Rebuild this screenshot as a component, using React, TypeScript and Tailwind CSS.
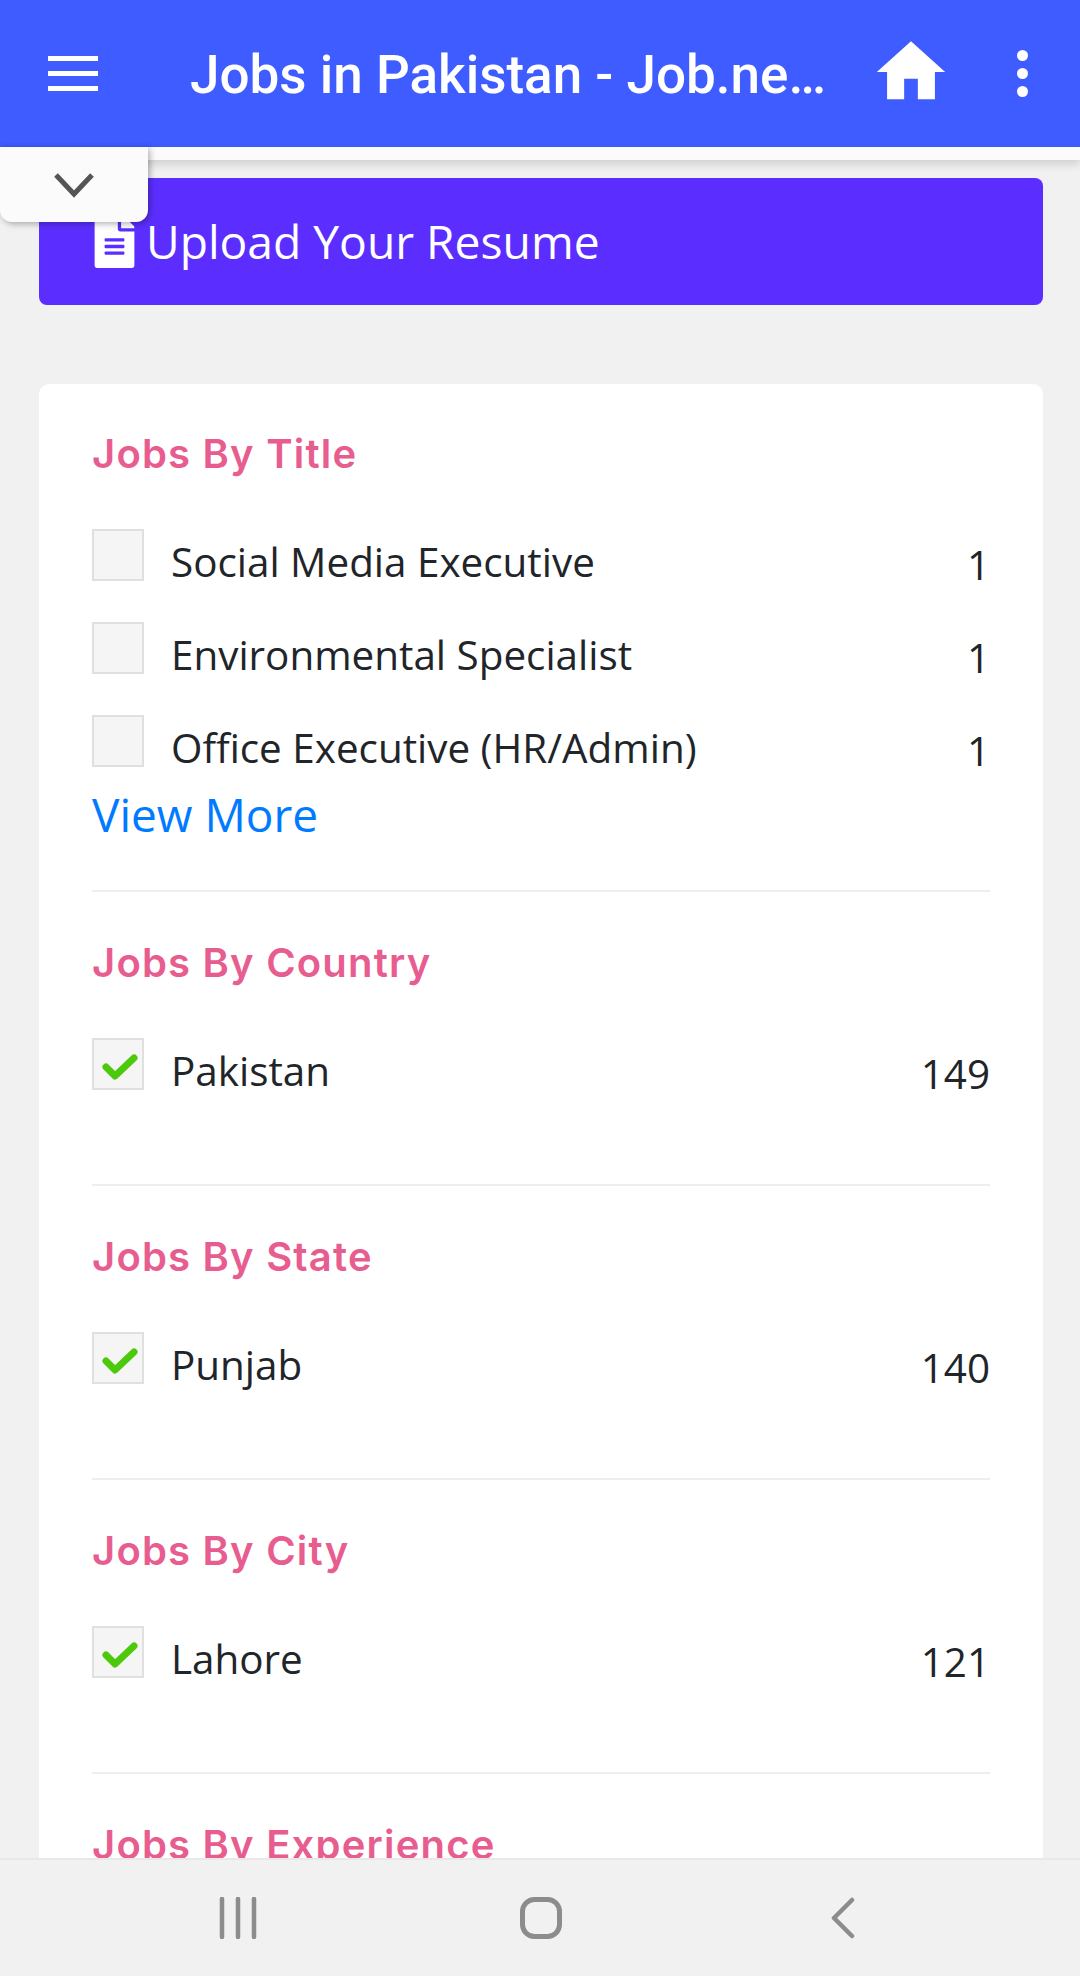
import { FaFileAlt } from "react-icons/fa";
import { MdHome } from "react-icons/md";

const titleJobs = [
  { name: "Social Media Executive", count: 1 },
  { name: "Environmental Specialist", count: 1 },
  { name: "Office Executive (HR/Admin)", count: 1 },
];

function FilterRow({ name, count, checked }: { name: string; count: number; checked?: boolean }) {
  return (
    <div className="flex items-start">
      <div className="h-[52px] w-[52px] shrink-0 border-2 border-[#e0e0e0] bg-[#f5f5f5]">
        {checked ? (
          <svg width="48" height="48" viewBox="0 0 48 48" fill="none" stroke="#4cc90a" strokeWidth="7" strokeLinecap="round" strokeLinejoin="round">
            <path d="M12 27l9 9 19-18" />
          </svg>
        ) : null}
      </div>
      <span className="ml-[27px] mt-[5px] flex-1 text-[40.4px] leading-[56px] text-[#212529]">{name}</span>
      <span className="mt-[8px] text-[40.4px] leading-[56px] text-[#212529]">{count}</span>
    </div>
  );
}

function Heading({ children }: { children: string }) {
  return (
    <h3 className="mb-[53px] text-[40px] leading-[44px] font-semibold tracking-[1.2px] text-[#e85d90] font-['Inter',sans-serif]">
      {children}
    </h3>
  );
}

function SingleSection({ title, name, count }: { title: string; name: string; count: number }) {
  return (
    <section className="border-b-2 border-[#eeeeee] pb-[82px] pt-[49px]">
      <Heading>{title}</Heading>
      <FilterRow name={name} count={count} checked />
    </section>
  );
}

export default function App() {
  return (
    <div className="relative flex h-[1976px] w-[1080px] flex-col overflow-hidden bg-[#f1f1f1] font-['Open_Sans',sans-serif]">
      <header className="flex h-[147px] shrink-0 items-center bg-[#3e5cff] font-['Roboto',sans-serif] text-white">
        <div className="ml-[48px] flex h-[35px] w-[50px] flex-col justify-between">
          <span className="h-[5px] bg-white" />
          <span className="h-[5px] bg-white" />
          <span className="h-[5px] bg-white" />
        </div>
        <h1 className="ml-[92px] mt-[4px] w-[640px] truncate text-[53px] font-medium">Jobs in Pakistan - Job.net.pk</h1>
        <MdHome className="-mt-[3px] ml-[40px] text-[82px]" />
        <div className="ml-[65px] flex flex-col gap-[7px]">
          <span className="h-[11px] w-[11px] rounded-full bg-white" />
          <span className="h-[11px] w-[11px] rounded-full bg-white" />
          <span className="h-[11px] w-[11px] rounded-full bg-white" />
        </div>
      </header>

      <div className="h-[13px] shrink-0 bg-[#fbfbfb] shadow-[0_4px_10px_rgba(0,0,0,0.15)]" />

      {/* collapse tab over the top of the page */}
      <div className="absolute left-0 top-[147px] z-10 flex h-[75px] w-[148px] justify-center rounded-b-[12px] bg-[#fbfbfb] pt-[25px] shadow-[2px_2px_6px_rgba(0,0,0,0.3)]">
        <svg width="40" height="26" viewBox="0 0 40 26" fill="none" stroke="#555555" strokeWidth="5">
          <path d="M2 3l18 19L38 3" />
        </svg>
      </div>

      <main className="flex-1 overflow-hidden pl-[39px] pr-[37px] pt-[18px]">
        <button className="flex h-[127px] w-full items-center gap-[5px] rounded-[8px] bg-[#5b2eff] pl-[49px] text-[46.2px] text-white">
          <FaFileAlt className="text-[53px]" />
          <span>Upload Your Resume</span>
        </button>

        <div className="mt-[79px] rounded-[10px] bg-white px-[53px]">
          <section className="border-b-2 border-[#eeeeee] pb-[46px] pt-[48px]">
            <Heading>Jobs By Title</Heading>
            <div className="flex flex-col gap-[29px]">
              {titleJobs.map((job) => (
                <FilterRow key={job.name} name={job.name} count={job.count} />
              ))}
            </div>
            <a className="mt-[5px] block text-[46px] leading-[60px] text-[#007bff]">View More</a>
          </section>
          <SingleSection title="Jobs By Country" name="Pakistan" count={149} />
          <SingleSection title="Jobs By State" name="Punjab" count={140} />
          <SingleSection title="Jobs By City" name="Lahore" count={121} />
          <section className="pt-[49px]">
            <Heading>Jobs By Experience</Heading>
          </section>
        </div>
      </main>

      <nav className="flex h-[118px] shrink-0 items-center border-t-2 border-[#e8e8e8] bg-[#f1f1f1] pl-[219px]">
        <svg width="38" height="42" viewBox="0 0 38 42" fill="none" stroke="#8c8c8c" strokeWidth="4.5" strokeLinecap="round">
          <path d="M3 2v38M19 2v38M35 2v38" />
        </svg>
        <svg className="ml-[263px]" width="42" height="42" viewBox="0 0 42 42" fill="none" stroke="#8c8c8c" strokeWidth="5">
          <rect x="2.5" y="2.5" width="37" height="37" rx="12" />
        </svg>
        <svg className="ml-[269px]" width="24" height="42" viewBox="0 0 24 42" fill="none" stroke="#8c8c8c" strokeWidth="4.5" strokeLinecap="round" strokeLinejoin="round">
          <path d="M21 3L3 21l18 18" />
        </svg>
      </nav>
    </div>
  );
}
